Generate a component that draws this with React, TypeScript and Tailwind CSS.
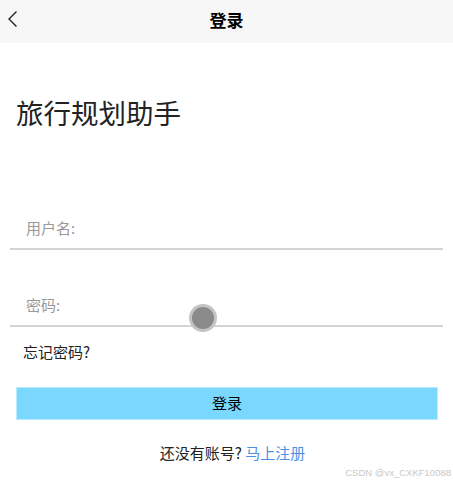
import React from "react";

export default function App() {
  const font = { fontFamily: '"Noto Sans CJK SC", "Noto Sans", sans-serif' };
  return (
    <div className="w-[453px] h-[485px] bg-white relative overflow-hidden" style={font}>
      {/* header */}
      <div className="h-[43px] bg-[#f7f7f7] relative flex items-center justify-center pb-[4px]">
        <svg className="absolute left-[6px] top-[10px]" width="14" height="18" viewBox="0 0 14 18">
          <path d="M10.5 1.5 L3 9 L10.5 16.5" fill="none" stroke="#222" strokeWidth="1.4" />
        </svg>
        <span className="text-[17px] font-bold text-black leading-none">登录</span>
      </div>

      <div className="px-[16px]">
        <div className="mt-[56px] text-[27.5px] text-[#222] leading-none">旅行规划助手</div>

        <div className="mt-[83px] -mx-[6px] border-b-[2px] border-[#d4d4d4] h-[40px] flex items-center pl-[16px] text-[15px] text-[#999]">
          用户名:
        </div>
        <div className="mt-[37px] -mx-[6px] border-b-[2px] border-[#d4d4d4] h-[40px] flex items-center pl-[16px] text-[15px] text-[#999]">
          密码:
        </div>

        <div className="mt-[17px] ml-[7px] text-[15px] text-[#222] leading-none">忘记密码?</div>

        <div className="mt-[28px] w-[422px] h-[33px] bg-[#7ad7fe] border border-[#b9ebff] flex items-center justify-center text-[15px] text-black">
          登录
        </div>

        <div className="mt-[22px] text-center text-[15px] text-[#222] pl-[12px]">
          还没有账号? <span className="text-[#4a90e2]">马上注册</span>
        </div>
      </div>

      {/* touch indicator */}
      <div className="absolute left-[189px] top-[304px] w-[28px] h-[28px] rounded-full bg-[#c4c4c4] flex items-center justify-center">
        <div className="w-[22px] h-[22px] rounded-full bg-[#8a8a8a]" />
      </div>

      <div className="absolute right-[2px] top-[468px] text-[9.5px] text-[#c8c8c8] leading-none" style={{ fontFamily: '"Liberation Sans", Arial, sans-serif' }}>
        CSDN @vx_CXKF10088
      </div>
    </div>
  );
}
